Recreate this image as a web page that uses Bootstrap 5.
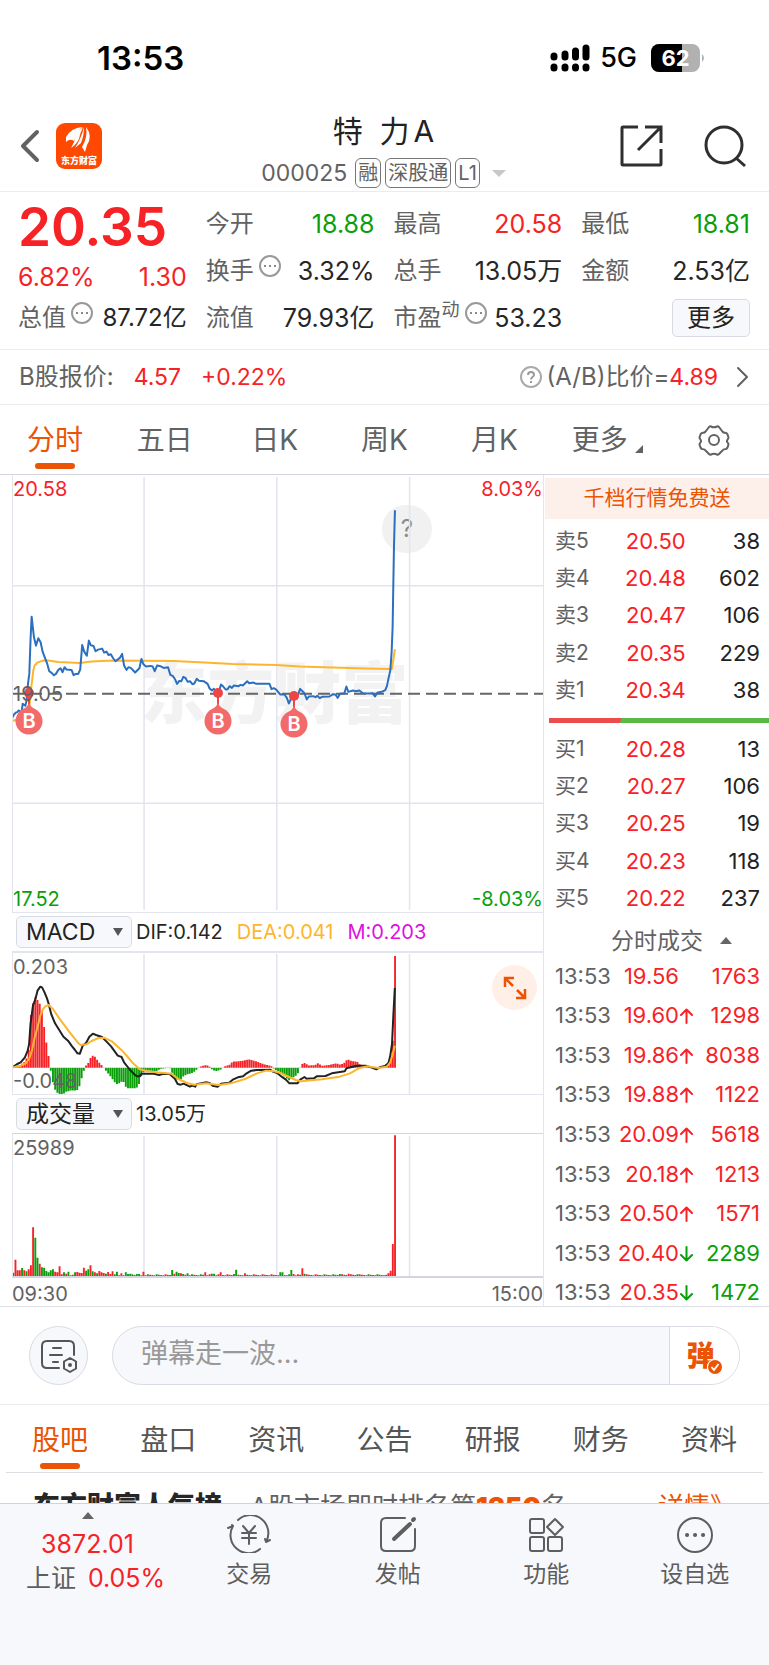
<!DOCTYPE html>
<html lang="zh-CN">
<head>
<meta charset="utf-8">
<meta name="viewport" content="width=device-width, initial-scale=1">
<title>特力A 000025</title>
<link href="https://cdn.jsdelivr.net/npm/bootstrap@5.3.0/dist/css/bootstrap.min.css" rel="stylesheet">
<style>
:root{--up:#f72226;--down:#0a9f0a;--brand:#ea5404;--ink:#262626;--mute:#626262;--rule:#ececec;--grid:#e2e4ee;--soft:#f7f8fb}
body{font-family:Inter,"Noto Sans CJK SC",sans-serif;color:var(--ink);font-size:24px;line-height:30px;background:#fff}
a{color:inherit;text-decoration:none}
svg{display:block}
.plain-btn{border:0;background:none;padding:0;color:inherit}
.up{color:var(--up)}.down{color:var(--down)}.mute{color:var(--mute)}.brand{color:var(--brand)}
.ruled{border-bottom:1px solid var(--rule)}
.stroke{fill:none;stroke:currentColor;stroke-linecap:round;stroke-linejoin:round}

.status-bar{height:104px;padding:12px 64px 0 97px;color:#000}
.clock{font-size:33px;font-weight:600}
.net{font-size:27px;font-weight:500;margin:0 14px 0 10px}

.title-bar{height:88px;padding:0 22px 3px 20px}
.side-tools{flex:1 1 0}
.stock-name{font-size:30px;line-height:54px;font-weight:400;color:#222;word-break:keep-all}
.stock-code{font-size:23px;gap:4px}
.tag{border:1px solid #777;border-radius:6px;font-size:20px;line-height:28px;padding:0 2px}
.caret{width:0;height:0;border:7px solid transparent;border-bottom-width:0;border-top-color:#c8c8c8}

.quote{display:grid;grid-template-columns:repeat(4,minmax(0,1fr));grid-auto-rows:47px;column-gap:19px;padding:8px 19px 8px 18px;height:158px}
.quote-cell{display:flex;align-items:center;justify-content:space-between;white-space:nowrap}
.quote-main{grid-row:span 2}
.num{font-size:25px}
.price{font-size:53px;line-height:54px;font-weight:600}
.more-btn{font-size:24px;line-height:36px;padding:0 14px;background:var(--soft);border:1px solid #d9dbe3;border-radius:5px;color:#222}
.dots-icon{margin:-10px auto 0 4px}
.sup{font-size:18px;line-height:20px;margin-top:-16px}

.b-share{height:55px;padding:0 19px}
.b-share .up{font-size:23px}
.period{height:69px;font-size:28px;color:var(--mute)}
.tab-item{flex:1 1 0;display:flex;align-items:center;justify-content:center;position:relative;height:100%}
.tab-item.on{color:var(--brand)}
.tab-item.on::after{content:"";position:absolute;bottom:5px;left:50%;width:40px;margin-left:-20px;height:6px;border-radius:3px;background:var(--brand)}
.corner{width:0;height:0;border:4px solid transparent;border-right-color:var(--mute);border-bottom-color:var(--mute);margin:18px -6px 0 7px}

.market{border-top:1px solid #d4d5de;border-bottom:1px solid #e0e1e6}
.plots{flex:1 1 0;min-width:0;margin-left:12px;border-right:1px solid var(--grid);font-size:20px;line-height:24px}
.plot{position:relative;border-left:1px solid var(--grid)}
.plot svg.canvas{width:100%;height:100%}
.plot-price{height:438px;border-bottom:1px solid var(--grid)}
.plot-macd{height:144px;border-top:2px solid var(--grid);border-bottom:1px solid var(--grid)}
.plot-vol{height:145px;border-top:1px solid #d4d5de;border-bottom:2px solid #d4d5de}
.plot path,.plot line{vector-effect:non-scaling-stroke}
.lbl{position:absolute}
.tl{left:0;top:2px}.tr{right:0;top:2px}.bl{left:0;bottom:1px}.br{right:0;bottom:1px}
.pick-row{height:38px;gap:14px;padding-left:4px;white-space:nowrap}
.pick{appearance:none;width:116px;height:32px;line-height:28px;border:1px solid #d9dbe3;border-radius:5px;background:var(--soft);color:#222;font-size:23px;padding:0 0 0 9px}
.pick-wrap{position:relative;margin-right:-10px}
.pick-wrap::after{content:"";position:absolute;right:9px;top:12px;border:5px solid transparent;border-top:8px solid #555;border-bottom:0;pointer-events:none}
.watermark{position:absolute;left:24%;top:50%;transform:translateY(-50%);font-size:67px;line-height:80px;font-weight:900;color:#f2f2f2;white-space:nowrap}
.hint{position:absolute;left:70%;top:30px;width:50px;height:48px;margin-left:-2px;border-radius:24px;background:#f1f1f1;color:#8a8a8a;font-size:24px}
.pin{position:absolute;width:28px;height:50px;margin:-7px 0 0 -15px}
.expand{position:absolute;right:6px;top:12px;width:45px;height:45px;border-radius:50%;background:#ffefe7;color:var(--brand)}

.book{flex:0 0 225px;font-size:22px;line-height:26px}
.promo{display:block;margin:3px 0 3px 1px;height:41px;line-height:39px;font-size:21px;text-align:center;background:#fdf0ea;color:var(--brand)}
.book table{width:100%;table-layout:fixed}
.book td,.book th{padding:0;font-weight:400;white-space:nowrap}
.levels{height:187px}
.levels th{width:36%;padding-left:11px;color:var(--mute);font-size:21px}
.levels td:nth-child(2){width:27%;text-align:right}
.book td:last-child{text-align:right;padding-right:9px}
.levels td:last-child{color:#222}
.ratio{height:5px;margin:9px 2px 7px 5px;background:linear-gradient(115deg,#ec4c4c 0 32%,#59b947 32%)}
.deals-head{height:39px;padding-top:8px;padding-left:67px;font-size:23px;gap:17px;color:var(--mute)}
.tri-up{width:0;height:0;border:6px solid transparent;border-top:0;border-bottom:7px solid #666}
.deals{height:356px;margin-bottom:-6px}
.deals th{width:68px;padding-left:11px;color:var(--mute)}
.deals td:nth-child(2){width:81px;text-align:right}
.deals svg,.deals i{display:inline-block;width:13px;vertical-align:-1px;margin-left:1px}

.danmu{height:98px;padding:0 29px;gap:24px}
.round-btn{width:59px;height:59px;border-radius:50%;border:1px solid #d9dbe3;background:var(--soft);color:#555}
.pill{height:59px;border:1px solid #d9dbe3;border-radius:30px;overflow:hidden;background:var(--soft)}
.pill input{flex:1 1 0;min-width:0;border:0;background:none;padding:0 0 4px 28px;font-size:27px;color:#222;outline:0}
.pill input::placeholder{color:#999}
.pill button{width:70px;border:0;border-left:1px solid #d9dbe3;background:#fff;color:var(--brand);font-size:28px;font-weight:900;position:relative;padding:0 8px 0 0}
.pill button svg{position:absolute;left:37px;top:32px}
.topics{height:68px;margin:0 6px;padding-top:2px;font-size:28px;color:#555;border-bottom:1px solid #dedfe4}
.topics .tab-item.on::after{bottom:3px}
.rank{height:30px;overflow:hidden;padding:17px 33px 0;font-size:26px;line-height:34px;white-space:nowrap}
.rank b{font-weight:900}
.rank>b{font-size:27px}

.dock{height:162px;background:var(--soft);border-top:1px solid #d0d2da;color:#5e5e5e}
.index{flex:0 0 175px;padding-top:8px;font-size:25px;line-height:34px}
.dock-item{flex:1 1 0;padding-top:11px;font-size:23px;line-height:42px;display:flex;flex-direction:column;align-items:center}
</style>
</head>
<body>
<header>
  <div class="status-bar d-flex align-items-center justify-content-between">
    <span class="clock">13:53</span>
    <div class="d-flex align-items-center">
      <svg width="40" height="28" viewBox="0 0 40 28" aria-hidden="true"><g stroke="#000" stroke-width="7" stroke-linecap="round"><path d="M4 12v1M15 10v3M25.500 7v6M36 4v9M4 23v1M15 23v1M25.500 23v1M36 23v1"/></g></svg>
      <span class="net">5G</span>
      <svg width="54" height="28" viewBox="0 0 54 28" role="img" aria-label="电量 62"><defs><clipPath id="bat"><rect width="49" height="28" rx="8"/></clipPath></defs><g clip-path="url(#bat)"><rect width="49" height="28" fill="#b1b1b1"/><rect width="31" height="28"/></g><path d="M51 10q4 4 0 8z" fill="#b1b1b1"/><text x="24.500" y="22" text-anchor="middle" font-size="22" font-weight="700" fill="#fff">62</text></svg>
    </div>
  </div>
  <div class="title-bar ruled d-flex align-items-center">
    <div class="side-tools d-flex align-items-center">
      <button class="plain-btn mute" aria-label="返回"><svg width="20" height="34" viewBox="0 0 20 34" class="stroke" stroke-width="4"><path d="M17 3L3 17l14 14"/></svg></button>
      <svg class="ms-3" width="46" height="46" viewBox="0 0 46 46" role="img" aria-label="东方财富"><rect width="46" height="46" rx="9" fill="#ff4800"/><path d="M10 14Q15 5 26 4Q21 9 18 18Q14 15 10 19ZM27 4Q24 10 23 16Q20 22 15 25L18 19Q20 9 27 4ZM28 4Q28 13 25 20L19 25Q25 16 28 4ZM30 4Q37 13 31 22L29 29L26 24Q32 14 30 4Z" fill="#fff"/><text x="23" y="41" text-anchor="middle" font-size="9" font-weight="900" fill="#fff" font-family="Noto Sans CJK SC">东方财富</text></svg>
    </div>
    <div class="text-center">
      <h1 class="stock-name m-0">特&nbsp;&nbsp;力<span class="ms-1">A</span></h1>
      <div class="stock-code mute d-flex align-items-center"><span class="me-1">000025</span><span class="tag">融</span><span class="tag">深股通</span><span class="tag">L1</span><span class="caret ms-2"></span></div>
    </div>
    <div class="side-tools d-flex align-items-center justify-content-end">
      <button class="plain-btn me-4 pe-3" aria-label="分享"><svg width="44" height="44" viewBox="0 0 44 44" fill="none" stroke="#2f2f2f" stroke-width="3"><path d="M18 3H3q-1 0-1 1v36q0 1 1 1h37q1 0 1-1V25M25 3h16v16M41 3L18 26"/></svg></button>
      <button class="plain-btn" aria-label="搜索"><svg width="43" height="43" viewBox="0 0 43 43" fill="none" stroke="#2f2f2f" stroke-width="3"><circle cx="20" cy="20" r="18"/><path d="M32 33l9 8"/></svg></button>
    </div>
  </div>
</header>

<main>
  <section class="quote ruled">
    <div class="quote-main up d-flex flex-column">
      <div class="price">20.35</div>
      <div class="num d-flex justify-content-between pt-2"><span>6.82%</span><span>1.30</span></div>
    </div>
    <div class="quote-cell"><span class="mute">今开</span><span class="num down">18.88</span></div>
    <div class="quote-cell"><span class="mute">最高</span><span class="num up">20.58</span></div>
    <div class="quote-cell"><span class="mute">最低</span><span class="num down">18.81</span></div>
    <div class="quote-cell"><span class="mute">换手</span><svg class="dots-icon" width="24" height="24" viewBox="0 0 24 24"><circle cx="12" cy="12" r="10" fill="none" stroke="#999" stroke-width="2"/><path d="M6 11h2v2H6zm5 0h2v2h-2zm5 0h2v2h-2z" fill="#888"/></svg><span class="num">3.32%</span></div>
    <div class="quote-cell"><span class="mute">总手</span><span class="num">13.05万</span></div>
    <div class="quote-cell"><span class="mute">金额</span><span class="num">2.53亿</span></div>
    <div class="quote-cell"><span class="mute">总值</span><svg class="dots-icon" width="24" height="24" viewBox="0 0 24 24"><circle cx="12" cy="12" r="10" fill="none" stroke="#999" stroke-width="2"/><path d="M6 11h2v2H6zm5 0h2v2h-2zm5 0h2v2h-2z" fill="#888"/></svg><span>87.72亿</span></div>
    <div class="quote-cell"><span class="mute">流值</span><span class="num">79.93亿</span></div>
    <div class="quote-cell"><span class="mute">市盈</span><span class="mute sup">动</span><svg class="dots-icon" width="24" height="24" viewBox="0 0 24 24"><circle cx="12" cy="12" r="10" fill="none" stroke="#999" stroke-width="2"/><path d="M6 11h2v2H6zm5 0h2v2h-2zm5 0h2v2h-2z" fill="#888"/></svg><span class="num">53.23</span></div>
    <div class="quote-cell justify-content-end"><button class="more-btn">更多</button></div>
  </section>

  <a href="#b-share" class="b-share ruled d-flex align-items-center">
    <span class="mute me-1">B股报价:</span><span class="up ms-3">4.57</span><span class="up ms-3 ps-1">+0.22%</span>
    <svg class="ms-auto" width="24" height="24" viewBox="0 0 24 24"><circle cx="12" cy="12" r="10" fill="none" stroke="#aaa" stroke-width="2"/><path d="M9 10q0-3 3-3t3 3q0 1-2 2.500q-1 .8-1 2M12 16v2" fill="none" stroke="#999" stroke-width="2"/></svg>
    <span class="mute ms-1">(A/B)比价=</span><span class="up">4.89</span>
    <svg class="stroke mute ms-3" width="16" height="22" viewBox="0 0 16 22" stroke-width="2"><path d="M4 2l9 9-9 9"/></svg>
  </a>

  <nav class="period d-flex">
    <a class="tab-item on" href="#m">分时</a><a class="tab-item" href="#d5">五日</a><a class="tab-item" href="#dk">日K</a><a class="tab-item" href="#wk">周K</a><a class="tab-item" href="#mk">月K</a><a class="tab-item" href="#more">更多<span class="corner"></span></a>
    <a class="tab-item" href="#set" aria-label="设置"><svg class="stroke" width="32" height="32" viewBox="0 0 32 32" stroke-width="2"><path d="M11 3q1-1 2-.5q3 1.500 6 0q1-.5 2 .5l3 4q1 2 4 2q1 .3 1.500 1.500l1 3q0 1-.8 1.800q-1.500 1.700 0 3.400q.8.800.8 1.800l-1 3q-.5 1.200-1.500 1.500q-3 0-4 2l-3 3q-1 1-2 .5q-3-1.500-6 0q-1 .5-2-.5l-3-3q-1-2-4-2q-1-.3-1.500-1.500l-1-3q0-1 .8-1.800q1.500-1.700 0-3.400q-.8-.8-.8-1.800l1-3q.5-1.200 1.500-1.500q3 0 4-2z"/><circle cx="16" cy="16" r="5"/></svg></a>
  </nav>

  <section class="market d-flex">
    <div class="plots">
      <div class="plot plot-price">
        <div class="watermark" aria-hidden="true">东方财富</div>
        <button class="hint plain-btn" aria-label="帮助">?</button>
        <svg class="canvas position-relative pe-none" viewBox="39 12 1593 1314" preserveAspectRatio="none" fill="none">
          <path d="M433 18V1320M832 18V1320M1231 18V1320M36 345H1632M36 999H1632" stroke="#e2e4ee" stroke-width="1.500"/>
          <line x1="36" y1="670" x2="1632" y2="670" stroke="#666" stroke-width="2" stroke-dasharray="12 6"/>
          <path stroke="#fdb52e" stroke-width="2" d="M38 750L45 750L52 745L70 738L82 728L88 712L94 650L100 600L104 585L112 576L130 570L145 570L175 574L240 577L275 573L340 570L520 571L600 575L700 580L830 583L900 588L1000 591L1100 594L1173 595L1178 594L1187 536"/>
          <path stroke="#2b6fc0" stroke-width="2" stroke-linejoin="round" d="M38 741L42 732L48 726L52 725L56 720L60 722L64 733L68 700L76 706L80 690L84 640L88 610L92 500L95 438L102 500L108 525L115 503L122 515L128 543L135 562L142 580L148 602L155 607L162 614L168 610L175 598L182 593L188 605L194 590L200 597L215 598L221 614L228 610L235 610L241 597L247 523L253 543L261 555L267 510L273 524L281 526L287 542L295 537L307 534L313 546L320 543L326 553L333 551L340 563L347 572L360 562L367 550L373 585L380 598L386 590L393 592L406 606L419 593L425 565L431 581L439 588L452 586L459 588L465 602L472 585L480 586L492 592L505 590L512 613L519 616L526 626L532 640L539 631L545 632L551 619L558 623L564 634L571 632L578 641L584 639L591 625L598 631L612 632L624 640L630 654L637 660L643 655L650 663L657 668L664 642L671 648L678 657L684 656L690 647L697 652L703 645L717 647L723 643L730 645L743 632L749 638L762 636L770 640L810 640L816 656L823 653L830 657L842 672L855 672L862 682L868 699L875 684L882 680L895 676L902 655L909 662L915 668L922 687L928 678L941 677L948 680L954 676L961 683L968 679L990 678L1001 671L1008 672L1015 682L1022 670L1035 668L1041 648L1047 664L1060 660L1070 662L1080 660L1090 668L1110 669L1120 668L1127 678L1134 667L1147 664L1158 659L1163 646L1168 622L1173 600L1177 545L1180 470L1184 230L1187 118"/>
        </svg>
        <span class="lbl tl up">20.58</span><span class="lbl tr up">8.03%</span>
        <span class="lbl bl down">17.52</span><span class="lbl br down">-8.03%</span>
        <svg class="pin" style="left:3.3%;top:50.100%" viewBox="0 0 28 50"><path d="M14 6v12" stroke="#f04545" stroke-width="2"/><circle cx="14" cy="6" r="5" fill="#f04545"/><path d="M14 15q1 5 6 7a13.500 13.500 0 1 1-12 0q5-2 6-7z" fill="#f26a6a"/><text x="14" y="41" text-anchor="middle" font-size="20" font-weight="600" fill="#fff">B</text></svg>
        <svg class="pin" style="left:38.900%;top:50.100%" viewBox="0 0 28 50"><path d="M14 6v12" stroke="#f04545" stroke-width="2"/><circle cx="14" cy="6" r="5" fill="#f04545"/><path d="M14 15q1 5 6 7a13.500 13.500 0 1 1-12 0q5-2 6-7z" fill="#f26a6a"/><text x="14" y="41" text-anchor="middle" font-size="20" font-weight="600" fill="#fff">B</text></svg>
        <svg class="pin" style="left:53.200%;top:50.700%" viewBox="0 0 28 50"><path d="M14 6v12" stroke="#f04545" stroke-width="2"/><circle cx="14" cy="6" r="5" fill="#f04545"/><path d="M14 15q1 5 6 7a13.500 13.500 0 1 1-12 0q5-2 6-7z" fill="#f26a6a"/><text x="14" y="41" text-anchor="middle" font-size="20" font-weight="600" fill="#fff">B</text></svg>
        <span class="lbl mute start-0 top-50 translate-middle-y">19.05</span>
      </div>
      <div class="pick-row d-flex align-items-center">
        <span class="pick-wrap"><select class="pick" aria-label="指标"><option>MACD</option></select></span>
        <span>DIF:0.142</span><span style="color:#fdb52e">DEA:0.041</span><span style="color:#e010e0">M:0.203</span>
      </div>
      <div class="plot plot-macd">
        <svg class="canvas" viewBox="38 157 1513 423" preserveAspectRatio="none" fill="none">
          <path d="M412 160V580M791 160V580M1170 160V580" stroke="#e2e4ee" stroke-width="1.500"/>
          <path id="macdUp" fill="#f72226"/><path id="macdDown" fill="#0a9f0a"/>
          <path stroke="#222" stroke-width="2" stroke-linejoin="round" d="M38 499L50 490L60 485L72 470L80 450L84 430L88 370L95 315L102 295L108 270L116 258L121 260L128 275L135 293L140 310L147 340L158 368L170 388L182 408L195 420L205 435L215 448L222 458L229 459L237 435L247 426L256 408L266 399L275 403L292 409L305 423L318 437L337 465L348 469L355 485L370 505L385 522L392 527L400 527L405 519L440 519L455 523L465 520L485 520L500 534L508 550L517 552L525 549L543 558L550 555L558 558L562 551L590 545L600 548L608 555L622 558L632 549L655 546L667 536L680 530L695 527L705 518L718 510L735 508L772 507L780 513L792 517L805 528L817 537L827 548L850 548L858 537L870 529L876 534L897 533L905 527L930 526L948 518L985 512L990 503L1005 499L1020 495L1045 495L1060 500L1075 506L1085 500L1100 496L1110 487L1115 465L1120 430L1124 340L1128 262"/>
          <path stroke="#fdb52e" stroke-width="2" stroke-linejoin="round" d="M38 500L60 495L75 487L84 475L92 450L100 410L108 380L116 345L124 325L130 317L140 313L152 325L170 353L200 395L225 428L232 433L248 431L262 421L280 413L298 411L320 422L350 450L380 487L400 506L430 513L470 517L490 519L510 535L535 547L555 552L590 548L625 553L660 548L700 535L735 518L760 510L780 511L800 516L820 526L845 538L860 542L920 536L970 528L1000 518L1025 503L1050 497L1080 502L1105 498L1115 485L1122 460L1128 435"/>
        </svg>
        <span class="lbl tl mute">0.203</span><span class="lbl bl mute">-0.048</span>
        <button class="expand plain-btn brand d-flex align-items-center justify-content-center" aria-label="展开"><svg width="24" height="24" viewBox="0 0 24 24" fill="none" stroke="currentColor" stroke-width="2.500"><path d="M2 11V2h9M2 2l8 8M22 13v9h-9M22 22l-8-8"/></svg></button>
      </div>
      <div class="pick-row d-flex align-items-center">
        <span class="pick-wrap"><select class="pick" aria-label="副图"><option>成交量</option></select></span>
        <span>13.05万</span>
      </div>
      <div class="plot plot-vol">
        <svg class="canvas" viewBox="38 103 1513 426" preserveAspectRatio="none" fill="none">
          <path d="M412 108V529M791 108V529M1170 108V529" stroke="#e2e4ee" stroke-width="1.500"/>
          <path id="volUp" fill="#f72226"/><path id="volDown" fill="#0a9f0a"/>
        </svg>
        <span class="lbl tl mute">25989</span>
      </div>
      <div class="mute d-flex justify-content-between pt-1 pb-0"><span>09:30</span><span>15:00</span></div>
    </div>

    <aside class="book">
      <a class="promo" href="#promo">千档行情免费送</a>
      <table class="levels"><tbody>
        <tr><th scope="row">卖5</th><td class="up">20.50</td><td>38</td></tr>
        <tr><th scope="row">卖4</th><td class="up">20.48</td><td>602</td></tr>
        <tr><th scope="row">卖3</th><td class="up">20.47</td><td>106</td></tr>
        <tr><th scope="row">卖2</th><td class="up">20.35</td><td>229</td></tr>
        <tr><th scope="row">卖1</th><td class="up">20.34</td><td>38</td></tr>
      </tbody></table>
      <div class="ratio"></div>
      <table class="levels"><tbody>
        <tr><th scope="row">买1</th><td class="up">20.28</td><td>13</td></tr>
        <tr><th scope="row">买2</th><td class="up">20.27</td><td>106</td></tr>
        <tr><th scope="row">买3</th><td class="up">20.25</td><td>19</td></tr>
        <tr><th scope="row">买4</th><td class="up">20.23</td><td>118</td></tr>
        <tr><th scope="row">买5</th><td class="up">20.22</td><td>237</td></tr>
      </tbody></table>
      <div class="deals-head d-flex align-items-center">分时成交<span class="tri-up"></span></div>
      <table class="deals"><tbody>
        <tr><th scope="row">13:53</th><td class="up">19.56<i></i></td><td class="up">1763</td></tr>
        <tr><th scope="row">13:53</th><td class="up">19.60<svg height="16" viewBox="0 0 13 16" class="stroke" stroke-width="2"><path d="M6.500 15V2M1 7l5.500-5.500L12 7"/></svg></td><td class="up">1298</td></tr>
        <tr><th scope="row">13:53</th><td class="up">19.86<svg height="16" viewBox="0 0 13 16" class="stroke" stroke-width="2"><path d="M6.500 15V2M1 7l5.500-5.500L12 7"/></svg></td><td class="up">8038</td></tr>
        <tr><th scope="row">13:53</th><td class="up">19.88<svg height="16" viewBox="0 0 13 16" class="stroke" stroke-width="2"><path d="M6.500 15V2M1 7l5.500-5.500L12 7"/></svg></td><td class="up">1122</td></tr>
        <tr><th scope="row">13:53</th><td class="up">20.09<svg height="16" viewBox="0 0 13 16" class="stroke" stroke-width="2"><path d="M6.500 15V2M1 7l5.500-5.500L12 7"/></svg></td><td class="up">5618</td></tr>
        <tr><th scope="row">13:53</th><td class="up">20.18<svg height="16" viewBox="0 0 13 16" class="stroke" stroke-width="2"><path d="M6.500 15V2M1 7l5.500-5.500L12 7"/></svg></td><td class="up">1213</td></tr>
        <tr><th scope="row">13:53</th><td class="up">20.50<svg height="16" viewBox="0 0 13 16" class="stroke" stroke-width="2"><path d="M6.500 15V2M1 7l5.500-5.500L12 7"/></svg></td><td class="up">1571</td></tr>
        <tr><th scope="row">13:53</th><td class="up">20.40<svg height="16" viewBox="0 0 13 16" class="stroke down" stroke-width="2"><path d="M6.500 1v13M1 9l5.500 5.500L12 9"/></svg></td><td class="down">2289</td></tr>
        <tr><th scope="row">13:53</th><td class="up">20.35<svg height="16" viewBox="0 0 13 16" class="stroke down" stroke-width="2"><path d="M6.500 1v13M1 9l5.500 5.500L12 9"/></svg></td><td class="down">1472</td></tr>
      </tbody></table>
    </aside>
  </section>

  <form class="danmu ruled d-flex align-items-center" onsubmit="return false">
    <button type="button" class="round-btn p-0 d-flex align-items-center justify-content-center" aria-label="弹幕设置"><svg class="stroke" width="38" height="34" viewBox="0 0 38 34" stroke-width="2"><path d="M19 29H7q-5 0-5-5V7q0-5 5-5h22q5 0 5 5v9M13 9h8M10 16h12M13 23h5"/><path d="M30 19l6 3.500v7L30 33l-6-3.500v-7z"/><circle cx="30" cy="26" r="1"/></svg></button>
    <div class="pill flex-fill d-flex">
      <input type="text" placeholder="弹幕走一波..." aria-label="弹幕">
      <button type="button">弹<svg width="16" height="16" viewBox="0 0 16 16"><circle cx="8" cy="8" r="8" fill="#fff"/><circle cx="8" cy="8" r="7" fill="#ea5404"/><path d="M4.500 8l2.500 3 4.500-6" fill="none" stroke="#fff" stroke-width="1.800"/></svg></button>
    </div>
  </form>

  <nav class="topics d-flex">
    <a class="tab-item on" href="#guba">股吧</a><a class="tab-item" href="#pankou">盘口</a><a class="tab-item" href="#news">资讯</a><a class="tab-item" href="#notice">公告</a><a class="tab-item" href="#report">研报</a><a class="tab-item" href="#finance">财务</a><a class="tab-item" href="#info">资料</a>
  </nav>
  <div class="rank d-flex"><b>东方财富人气榜</b><span class="mute ms-4 ps-1">A股市场即时排名第<b class="brand">1350</b>名</span><a class="brand ms-auto" href="#detail">详情》</a></div>
</main>

<nav class="dock fixed-bottom d-flex">
  <a class="index text-center" href="#sh"><span class="tri-up d-block mx-auto mb-1"></span><span class="up d-block pt-1">3872.01</span><span class="ms-3">上证</span><span class="up ms-2 ps-1">0.05%</span></a>
  <a class="dock-item" href="#trade"><svg class="stroke" width="44" height="38" viewBox="0 0 44 38" stroke-width="2"><path d="M11 5A18 18 0 0 1 39 27l4-2M33 34A18 18 0 0 1 6 11L1 13M6 11l-1-1M39 27l-1-3M16 11l6 7 6-7M22 18v11M15 18h14M15 23h14"/></svg>交易</a>
  <a class="dock-item" href="#post"><svg class="stroke" width="38" height="38" viewBox="0 0 38 38" stroke-width="2"><path d="M26 3H7Q2 3 2 8v23q0 5 5 5h24q5 0 5-5V14"/><path d="M15 24L31 9" stroke-width="4"/><path d="M34 5l1-1" stroke-width="4"/></svg>发帖</a>
  <a class="dock-item" href="#tools"><svg class="stroke" width="38" height="38" viewBox="0 0 38 38" stroke-width="2"><rect x="3" y="4" width="14" height="14" rx="2"/><rect x="3" y="22" width="14" height="14" rx="2"/><rect x="21" y="22" width="14" height="14" rx="2"/><path d="M28 4l8 8-8 8-8-8z"/></svg>功能</a>
  <a class="dock-item" href="#fav"><svg class="stroke" width="38" height="38" viewBox="0 0 38 38" stroke-width="2"><circle cx="19" cy="20" r="17"/><path d="M11 20h.1M19 20h.1M27 20h.1" stroke-width="4"/></svg>设自选</a>
</nav>

<script src="https://cdn.jsdelivr.net/npm/bootstrap@5.3.0/dist/js/bootstrap.bundle.min.js"></script>
<script>
// One bar per trading minute; x positions share the 240-minute time axis.
const STEP = 6.3, X0 = 36, MINUTES = 174;
const bar = (i, base, h) => `M${X0 + i * STEP} ${base}h5.4v${-h}h-5.4z`;

// MACD histogram: [x, height] key points, interpolated per minute.
const hist = [[38,2],[60,8],[75,22],[84,60],[90,180],[96,195],[100,213],[106,205],[112,198],[119,177],[125,135],[131,88],[138,45],[144,0],[150,-35],[156,-62],[162,-74],[170,-79],[180,-80],[190,-72],[205,-68],[220,-69],[228,-55],[238,-15],[245,5],[252,12],[258,28],[265,36],[270,35],[276,26],[285,14],[295,3],[302,-8],[315,-25],[330,-46],[337,-50],[345,-43],[352,-40],[362,-62],[390,-62],[400,-45],[405,-20],[412,-12],[430,-8],[445,-12],[460,-3],[485,0],[492,-15],[505,-35],[515,-38],[525,-25],[535,-20],[550,-16],[560,-8],[566,0],[575,4],[590,8],[600,2],[608,-8],[620,-10],[630,-6],[640,3],[655,8],[665,18],[690,20],[712,25],[735,18],[755,10],[775,5],[785,-6],[800,-12],[825,-38],[835,-32],[850,-20],[857,0],[865,13],[873,14],[880,6],[900,8],[908,13],[920,6],[940,8],[960,13],[972,9],[982,13],[992,25],[1005,20],[1020,18],[1030,8],[1045,3],[1060,2],[1072,-4],[1085,2],[1100,6],[1112,20],[1120,60],[1126,120],[1131,335]];
const at = x => {
  const k = hist.findIndex(p => p[0] >= x);
  if (k < 1) return hist[k < 0 ? hist.length - 1 : 0][1];
  const [a, b] = [hist[k - 1], hist[k]];
  return a[1] + (b[1] - a[1]) * (x - a[0]) / (b[0] - a[0]);
};
let up = '', down = '';
for (let i = 0; i < MINUTES; i++) {
  const h = at(X0 + 2.5 + i * STEP + (i === MINUTES - 1 ? 4 : 0));
  if (h >= 0) up += bar(i, 501, h); else down += bar(i, 501, h);
}
macdUp.setAttribute('d', up);
macdDown.setAttribute('d', down);

// Volume: opening minutes in full, then the notable minutes of the day.
const open = 'g10 r49 r17 r17 g24 r17 g14 r20 r32 r146 g115 g55 r37 g26 g25 g15 g11 g17 g20 r13 r11 r29 r5 g11 r7 g13 r2 r4 g11 r12 r10 r9 r25 g16 g20 r32 g14 r11 g8 r15 r11 r9 g7 r12 r6 r14 g5 g13 r2 r8 r2 g11 g6 g7 g5 r3 g6 g6 r2 r13 r2 g5'.split(' ');
const marks = {72:'g18',73:'r7',74:'g13',75:'g9',76:'r8',77:'g6',79:'g8',87:'r11',90:'g7',91:'g7',94:'r11',100:'g6',101:'g19',105:'r8',121:'g11',122:'g11',126:'g18',127:'r6',131:'r23',132:'g7',148:'g6',152:'r7',156:'g5',169:'r4',170:'r8',171:'r16',172:'r96',173:'r422'};
up = down = '';
for (let i = 0; i < MINUTES; i++) {
  const v = open[i] || marks[i] || (i % 5 < 2 ? 'g' : 'r') + (2 + i * 7 % 4);
  if (v[0] === 'r') up += bar(i, 529, +v.slice(1)); else down += bar(i, 529, +v.slice(1));
}
volUp.setAttribute('d', up);
volDown.setAttribute('d', down);
</script>
</body>
</html>
